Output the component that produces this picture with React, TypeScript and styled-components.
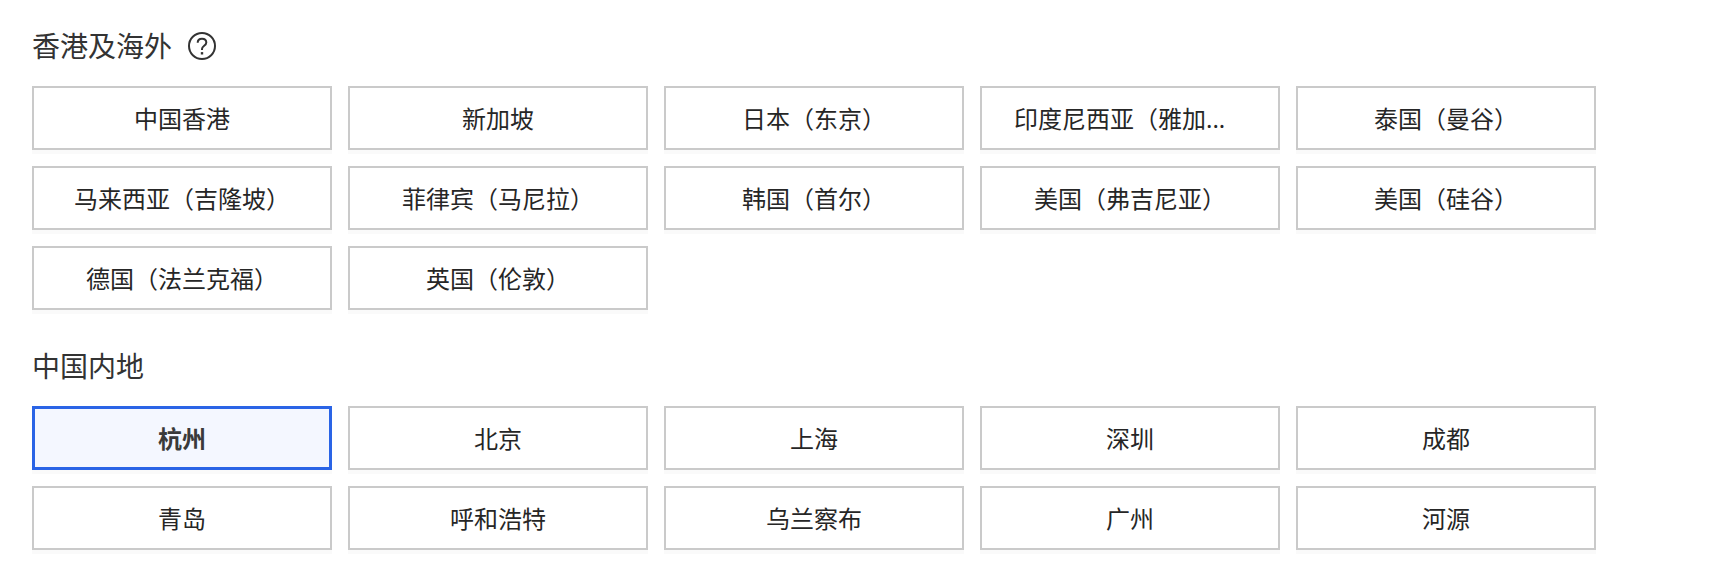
import React, { useState } from 'react';
import styled, { createGlobalStyle } from 'styled-components';

const GlobalStyle = createGlobalStyle`
  *, *::before, *::after { box-sizing: border-box; }
  body {
    margin: 0;
    background: #fff;
    color: #333;
    font-family: "Noto Sans", "Noto Sans CJK SC", sans-serif;
  }
`;

const Page = styled.main`
  padding: 24px 134px 24px 32px;
`;

const Group = styled.section`
  & + & { margin-top: 34px; }
`;

const GroupHeader = styled.header`
  display: flex;
  align-items: center;
  gap: 16px;
  height: 44px;
  margin-bottom: 18px;
`;

const GroupTitle = styled.h2`
  margin: 0;
  font-size: 28px;
  line-height: 44px;
  font-weight: 400;
`;

const HelpButton = styled.button`
  display: flex;
  padding: 0;
  border: 0;
  background: none;
  color: #333;
  cursor: pointer;
`;

const RegionGrid = styled.div`
  display: grid;
  grid-template-columns: repeat(5, minmax(0, 1fr));
  gap: 16px;
`;

const RegionButton = styled.button<{ $selected: boolean; $shortened: boolean }>`
  height: 64px;
  padding: 2px 32px 0;
  border: ${({ $selected }) => ($selected ? '3px solid #2a64e6' : '2px solid #cacaca')};
  background: ${({ $selected }) => ($selected ? '#f4f7ff' : '#fff')};
  box-shadow: 0 4px 0 #fafafa;
  color: ${({ $selected }) => ($selected ? '#3a3a3a' : '#262626')};
  font-family: inherit;
  font-size: 24px;
  line-height: 36px;
  font-weight: ${({ $selected }) => ($selected ? 700 : 400)};
  text-align: ${({ $shortened }) => ($shortened ? 'left' : 'center')};
  white-space: nowrap;
  cursor: pointer;
`;

const overseas = [
  '中国香港', '新加坡', '日本（东京）', '印度尼西亚（雅加...', '泰国（曼谷）',
  '马来西亚（吉隆坡）', '菲律宾（马尼拉）', '韩国（首尔）', '美国（弗吉尼亚）', '美国（硅谷）',
  '德国（法兰克福）', '英国（伦敦）',
];

const mainland = [
  '杭州', '北京', '上海', '深圳', '成都',
  '青岛', '呼和浩特', '乌兰察布', '广州', '河源',
];

const HelpIcon = () => (
  <svg width="28" height="28" viewBox="0 0 28 28" fill="none" stroke="currentColor" strokeWidth="2" aria-hidden="true">
    <circle cx="14" cy="14" r="13" />
    <path d="M9.7 10.7C9.7 8.2 11.5 6.7 14 6.7s4.300 1.500 4.300 3.700c0 3.300-4.300 3.300-4.300 6.600v1" />
    <path d="M12.800 21.300h2.400" strokeWidth="2.400" />
  </svg>
);

export default function App() {
  const [selected, setSelected] = useState('杭州');
  const renderRegions = (regions: string[]) => (
    <RegionGrid>
      {regions.map((name) => (
        <RegionButton
          key={name}
          type="button"
          $selected={name === selected}
          $shortened={name.endsWith('...')}
          aria-pressed={name === selected}
          onClick={() => setSelected(name)}
        >
          {name}
        </RegionButton>
      ))}
    </RegionGrid>
  );

  return (
    <>
      <GlobalStyle />
      <Page>
        <Group>
          <GroupHeader>
            <GroupTitle>香港及海外</GroupTitle>
            <HelpButton type="button" aria-label="帮助"><HelpIcon /></HelpButton>
          </GroupHeader>
          {renderRegions(overseas)}
        </Group>
        <Group>
          <GroupHeader>
            <GroupTitle>中国内地</GroupTitle>
          </GroupHeader>
          {renderRegions(mainland)}
        </Group>
      </Page>
    </>
  );
}
